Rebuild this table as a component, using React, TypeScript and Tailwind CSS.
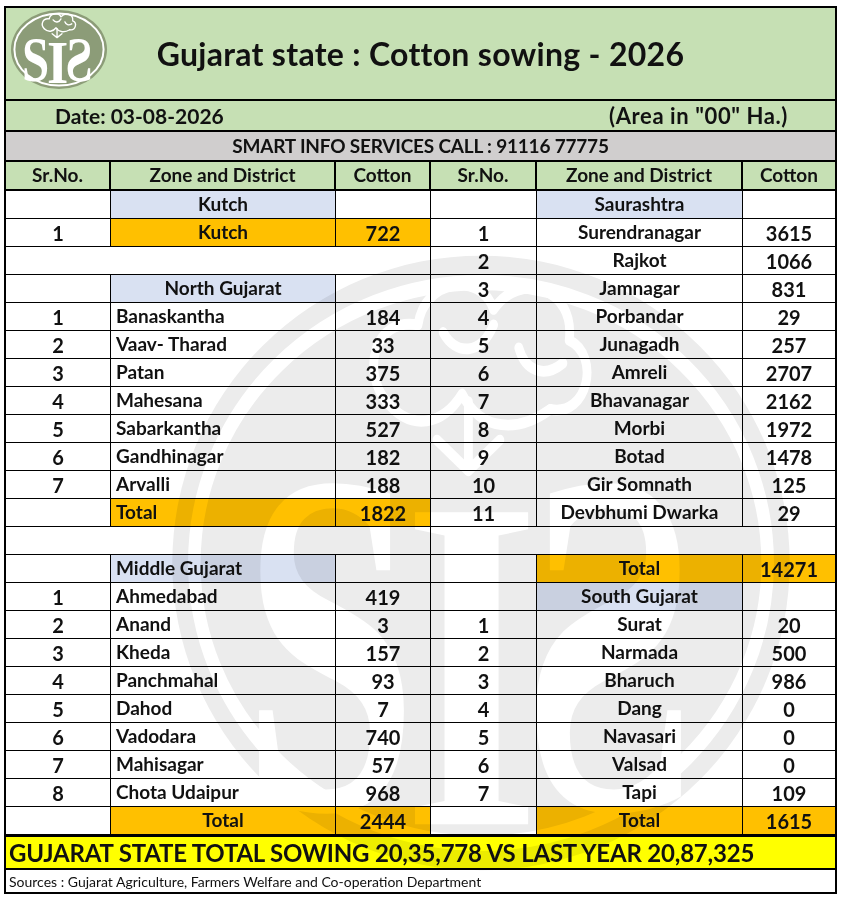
import React from 'react';

type Cell = {
  t?: string;
  span?: number;
  bg?: 'blue' | 'orange';
  left?: boolean;
  num?: boolean;
};

const E: Cell = {};
const M: Cell = { span: 3 };

const head = (name: string, left = false): Cell[] => [E, { t: name, bg: 'blue', left }, E];
const total = (v: string, left = false): Cell[] => [E, { t: 'Total', bg: 'orange', left }, { t: v, bg: 'orange', num: true }];
const row = (n: number, name: string, v: string, left = false): Cell[] => [
  { t: String(n), num: true },
  { t: name, left },
  { t: v, num: true },
];

const leftRows: Cell[][] = [
  head('Kutch'),
  [{ t: '1', num: true }, { t: 'Kutch', bg: 'orange' }, { t: '722', bg: 'orange', num: true }],
  [M],
  head('North Gujarat'),
  row(1, 'Banaskantha', '184', true),
  row(2, 'Vaav- Tharad', '33', true),
  row(3, 'Patan', '375', true),
  row(4, 'Mahesana', '333', true),
  row(5, 'Sabarkantha', '527', true),
  row(6, 'Gandhinagar', '182', true),
  row(7, 'Arvalli', '188', true),
  total('1822', true),
  [M],
  head('Middle Gujarat', true),
  row(1, 'Ahmedabad', '419', true),
  row(2, 'Anand', '3', true),
  row(3, 'Kheda', '157', true),
  row(4, 'Panchmahal', '93', true),
  row(5, 'Dahod', '7', true),
  row(6, 'Vadodara', '740', true),
  row(7, 'Mahisagar', '57', true),
  row(8, 'Chota Udaipur', '968', true),
  total('2444'),
];

const rightRows: Cell[][] = [
  head('Saurashtra'),
  row(1, 'Surendranagar', '3615'),
  row(2, 'Rajkot', '1066'),
  row(3, 'Jamnagar', '831'),
  row(4, 'Porbandar', '29'),
  row(5, 'Junagadh', '257'),
  row(6, 'Amreli', '2707'),
  row(7, 'Bhavanagar', '2162'),
  row(8, 'Morbi', '1972'),
  row(9, 'Botad', '1478'),
  row(10, 'Gir Somnath', '125'),
  row(11, 'Devbhumi Dwarka', '29'),
  [M],
  total('14271'),
  head('South Gujarat'),
  row(1, 'Surat', '20'),
  row(2, 'Narmada', '500'),
  row(3, 'Bharuch', '986'),
  row(4, 'Dang', '0'),
  row(5, 'Navasari', '0'),
  row(6, 'Valsad', '0'),
  row(7, 'Tapi', '109'),
  total('1615'),
];

// SIS logo: olive oval, white ring, cotton boll over the letters
const Logo = ({ className, fill = '#8c9c78' }: { className?: string; fill?: string }) => (
  <svg viewBox="0 0 100 82" className={className} preserveAspectRatio="none" aria-hidden="true">
    <ellipse cx="50" cy="41" rx="49" ry="40" fill={fill} />
    <ellipse cx="50" cy="41" rx="45.5" ry="36.5" fill="none" stroke="#fff" strokeWidth="2" />
    <g fill="none" stroke="#fff" strokeWidth="1.4" strokeLinecap="round" strokeLinejoin="round">
      <path d="M35 20 C31 16 33 9 40 10 C41 4 50 3 52 8 C56 3 65 5 64 12 C69 14 67 22 61 21" />
      <path d="M35 20 C39 24 44 23 47 19 C50 24 56 24 61 21" />
      <path d="M44 11 C46 14 50 14 52 10 M56 13 C57 16 60 17 63 15" />
      <path d="M48 20 L48 29 M43 25 L48 29 L53 25" />
    </g>
    <g fill="#fff" fontFamily="'Liberation Serif', 'DejaVu Serif', serif" fontWeight="700" fontSize="64">
      <g transform="translate(26 0) scale(0.78 1)">
        <text x="0" y="73" textAnchor="middle">S</text>
      </g>
      <g transform="translate(48.5 0) scale(0.9 1)">
        <text x="0" y="75" textAnchor="middle" fontSize="62">I</text>
      </g>
      <g transform="translate(70.5 0) scale(-0.78 1)">
        <text x="0" y="73" textAnchor="middle">S</text>
      </g>
    </g>
  </svg>
);

function BodyCell({ c, last }: { c: Cell; last: boolean }) {
  const bg = c.bg === 'orange' ? 'bg-[#ffc000]' : c.bg === 'blue' ? 'bg-[#d9e1f2]' : 'bg-white';
  return (
    <div
      className={`flex h-[28px] items-center border-b border-black ${last ? '' : 'border-r'} ${bg} ${
        c.left ? 'justify-start pl-[5px]' : 'justify-center'
      } ${c.span === 3 ? 'col-span-3' : ''} ${c.num ? 'text-[20px]' : 'text-[19px]'}`}
    >
      {c.t}
    </div>
  );
}

export default function App() {
  return (
    <div className="min-h-screen bg-white pl-[4px] pt-[6px] font-[Lato,sans-serif] font-bold text-[#111]">
      <div className="relative w-[833px] border-2 border-black">
        {/* Title */}
        <div className="grid h-[93px] grid-cols-[120px_1fr_120px] items-center border-b-2 border-black bg-[#c6e0b4]">
          <Logo className="ml-[4px] mt-[-8px] h-[81px] w-[98px]" />
          <h1 className="text-center text-[32px] tracking-[0.3px]">Gujarat state : Cotton sowing - 2026</h1>
          <div />
        </div>

        <div className="flex h-[31px] items-center justify-between border-b-2 border-black bg-[#c6e0b4] pl-[49px] pr-[47px]">
          <span className="text-[21px]">Date: 03-08-2026</span>
          <span className="text-[22px] tracking-[0.6px]">(Area in "00" Ha.)</span>
        </div>

        <div className="flex h-[30px] items-center justify-center border-b-2 border-black bg-[#d0cece] text-[19px] tracking-[-0.2px]">
          SMART INFO SERVICES CALL : 91116 77775
        </div>

        <div className="grid grid-cols-[105px_225px_95px_106px_206px_92px]">
          {['Sr.No.', 'Zone and District', 'Cotton', 'Sr.No.', 'Zone and District', 'Cotton'].map((h, i) => (
            <div
              key={i}
              className={`flex h-[29px] items-center justify-center border-b-2 border-black bg-[#c6e0b4] text-[19px] ${
                i === 5 ? '' : 'border-r-2'
              }`}
            >
              {h}
            </div>
          ))}
          {leftRows.map((l, r) => (
            <React.Fragment key={r}>
              {l.map((c, i) => (
                <BodyCell key={'l' + i} c={c} last={false} />
              ))}
              {rightRows[r].map((c, i) => (
                <BodyCell key={'r' + i} c={c} last={i === rightRows[r].length - 1} />
              ))}
            </React.Fragment>
          ))}
        </div>

        <div className="flex h-[35px] items-center border-y-2 border-black bg-[#ffff00] pl-[3px] text-[24px] tracking-[-0.2px]">
          GUJARAT STATE TOTAL SOWING 20,35,778 VS LAST YEAR 20,87,325
        </div>
        <div className="flex h-[22px] items-center bg-white pl-[3px] text-[14px] font-normal">
          Sources : Gujarat Agriculture, Farmers Welfare and Co-operation Department
        </div>

        {/* faint watermark of the logo behind the table */}
        <div className="pointer-events-none absolute left-[160px] top-[240px] mix-blend-multiply">
          <Logo fill="#ececec" className="h-[630px] w-[630px]" />
        </div>
      </div>
    </div>
  );
}
